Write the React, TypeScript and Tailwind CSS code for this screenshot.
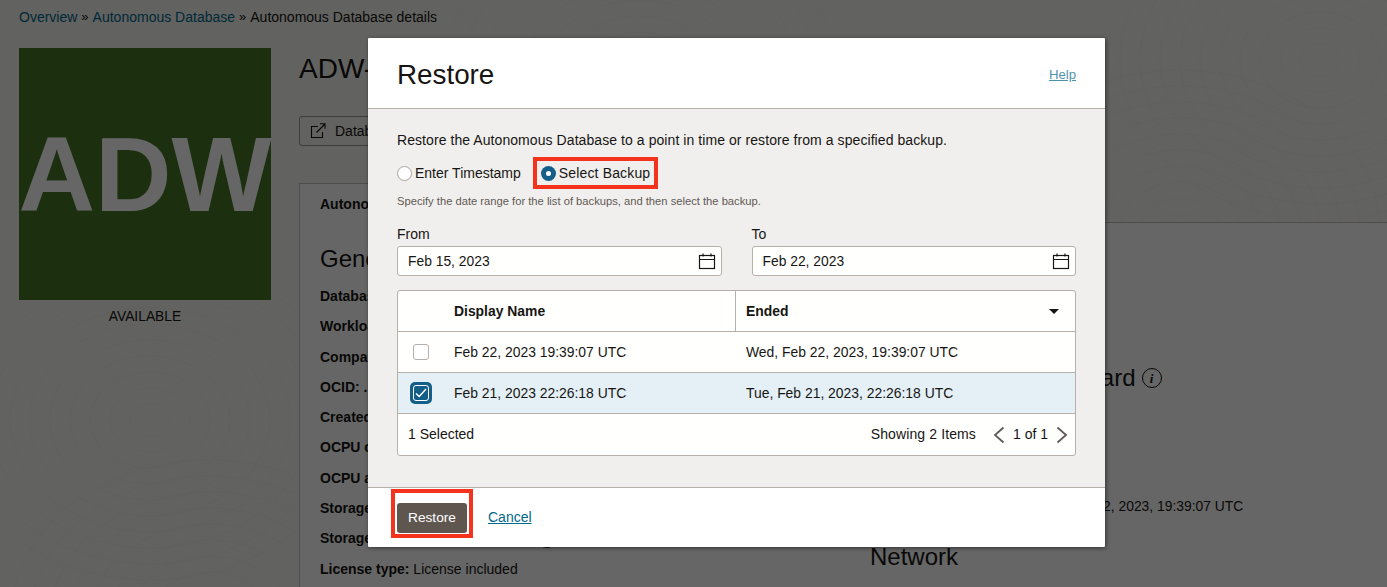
const labels = ['Database', 'Workload', 'Compartment', 'OCID: ...', 'Created', 'OCPU count', 'OCPU auto', 'Storage'];

const swirlCentres = [
  [1180, 230],
  [1320, 60],
  [150, 420],
  [210, 620],
  [640, 80],
];

function Swirls() {
  // faint fingerprint texture of the page background
  return (
    <svg className="absolute inset-0" width="1387" height="587" fill="none" stroke="#8c8474" strokeOpacity="0.03">
      {swirlCentres.map(([cx, cy]) =>
        [20, 40, 60, 80, 100, 120, 140, 160, 180, 200].map((r) => (
          <ellipse key={`${cx}-${r}`} cx={cx} cy={cy} rx={r} ry={r * 0.8} />
        )),
      )}
    </svg>
  );
}

function CalendarIcon() {
  return (
    <svg width="18" height="17" viewBox="0 0 18 17" fill="none" stroke="#161513" strokeWidth="1.2">
      <rect x="1.5" y="2.5" width="15" height="13" />
      <path d="M1.5 6.5h15M5 .5v3M13 .5v3" />
    </svg>
  );
}

function Chevron({ flip }: { flip?: boolean }) {
  return (
    <svg width="12" height="18" viewBox="0 0 12 18" fill="none" stroke="#5f5a55" strokeWidth="1.8" className={flip ? 'rotate-180' : ''}>
      <path d="M10.5 1.5 2 9l8.5 7.5" />
    </svg>
  );
}

function InfoIcon() {
  return (
    <span className="inline-flex h-[20px] w-[20px] items-center justify-center rounded-full border border-[#161513] font-['Liberation_Serif',serif] text-[13px] font-bold italic leading-none">
      i
    </span>
  );
}

function PageBehind() {
  return (
    <div className="relative flex h-[587px] flex-col overflow-hidden bg-[#f5f4f0] font-['Liberation_Sans',sans-serif] text-[14px] text-[#161513]">
      <Swirls />
      <div className="relative flex h-[34px] items-center gap-[4px] pl-[19px]">
        <span className="text-[#00688c]">Overview</span>
        <span className="text-[13px]">»</span>
        <span className="text-[#00688c]">Autonomous Database</span>
        <span className="text-[13px]">»</span>
        <span>Autonomous Database details</span>
      </div>
      <div className="relative mt-[14px] flex flex-1">
        <div className="ml-[19px] w-[252px] shrink-0">
          <div className="flex h-[252px] items-center justify-center bg-[#467828] text-[106px] font-bold leading-none text-white">
            ADW
          </div>
          <div className="mt-[7px] text-center text-[13.8px] leading-[20px]">AVAILABLE</div>
        </div>
        <div className="ml-[28px] flex min-w-0 flex-1 flex-col">
          <h1 className="h-[68px] pt-[4px] text-[28px] leading-[34px]">ADW-1</h1>
          <div className="flex h-[30px] w-[110px] items-center gap-[9px] rounded-[3px] border border-[#9e9892] pl-[10px]">
            <svg width="16" height="16" viewBox="0 0 16 16" fill="none" stroke="#161513" strokeWidth="1.1">
              <path d="M8 3.5H1.5v11h11V9M6.5 9.5 15 1M10 .8h5v5" />
            </svg>
            <span>Database</span>
          </div>
          <div className="mt-[37px] flex h-[40px] shrink-0 border-b border-[#c4c0ba]">
            <div className="-mb-px w-[220px] whitespace-nowrap border-x border-t border-[#c4c0ba] bg-white pl-[20px] pt-[10px] font-bold leading-[20px]">
              Autonom
            </div>
          </div>
          <div className="flex flex-1 border-l border-[#c4c0ba] bg-white">
            <div className="w-[550px] shrink-0 pl-[20px]">
              <div className="pt-[21px] text-[24px] leading-[30px]">General</div>
              <div className="mt-[12px] flex flex-col gap-[10.3px]">
                {labels.map((k) => (
                  <div key={k} className="font-bold leading-[20px]">
                    {k}
                  </div>
                ))}
                <div className="flex h-[20px] items-center font-bold">
                  Storage
                  <span className="ml-[165px] font-normal">
                    <InfoIcon />
                  </span>
                </div>
                <div className="leading-[20px]">
                  <b>License type:</b> License included
                </div>
              </div>
            </div>
            <div className="ml-[20px] flex flex-col">
              <div className="mt-[145px] flex items-center gap-[6px] text-[24px] leading-[16px]">
                Autonomous Data Guard <InfoIcon />
              </div>
              <div className="mt-[108px] whitespace-nowrap text-[13.85px] leading-[20px]">
                <b>Last Automatic Backup:</b> Wed, Feb 22, 2023, 19:39:07 UTC
              </div>
              <div className="mt-[26px] text-[24px] leading-[30px]">Network</div>
            </div>
          </div>
        </div>
      </div>
    </div>
  );
}

function DateField({ label, value }: { label: string; value: string }) {
  return (
    <div>
      <div className="text-[14px] leading-[18px]">{label}</div>
      <div className="mt-[3px] flex h-[30px] items-center justify-between rounded-[3px] border border-[#b5b0aa] bg-[#fffffe] pl-[10px] pr-[5px] text-[13.85px]">
        <span className="pt-[1px]">{value}</span>
        <CalendarIcon />
      </div>
    </div>
  );
}

function RestoreDialog() {
  return (
    <div className="absolute left-[368px] top-[38px] flex h-[509px] w-[737px] flex-col overflow-hidden rounded-[1px] bg-white font-['Liberation_Sans',sans-serif] text-[14px] text-[#161513] shadow-[1px_1px_4px_rgba(0,0,0,0.5)]">
      <div className="flex h-[71px] shrink-0 items-center justify-between border-b border-[#b5b0aa] px-[29px] pt-[4px]">
        <h2 className="text-[27.8px] leading-none">Restore</h2>
        <a className="text-[13.2px] text-[#00688c] underline opacity-70">Help</a>
      </div>
      <div className="flex-1 bg-[#f1efed] px-[29px]">
        <p className="pt-[21px] leading-[20px] tracking-[0.07px]">Restore the Autonomous Database to a point in time or restore from a specified backup.</p>
        <div className="mt-[7px] flex h-[32px] items-center">
          <span className="h-[15px] w-[15px] rounded-full border border-[#a8a39d] bg-white" />
          <span className="ml-[3px]">Enter Timestamp</span>
          <div className="ml-[12px] flex h-[32px] w-[125px] items-center border-4 border-[#f5321c] pl-[4px]">
            <span className="flex h-[15px] w-[15px] items-center justify-center rounded-full bg-[#135f88]">
              <span className="h-[5px] w-[5px] rounded-full bg-white" />
            </span>
            <span className="ml-[3px] whitespace-nowrap tracking-[0.15px]">Select Backup</span>
          </div>
        </div>
        <p className="mt-[4px] text-[11.2px] leading-[16px] text-[#5f5a55]">Specify the date range for the list of backups, and then select the backup.</p>
        <div className="mt-[16px] grid grid-cols-2 gap-x-[30px]">
          <DateField label="From" value="Feb 15, 2023" />
          <DateField label="To" value="Feb 22, 2023" />
        </div>
        <div className="mt-[14px] h-[166px] rounded-[3px] border border-[#b5b0aa] bg-[#fffffe] text-[13.9px]">
          <div className="grid h-[41px] grid-cols-[44px_294px_1fr] border-b border-[#b5b0aa] font-bold">
            <div />
            <div className="flex items-center pl-[12px]">Display Name</div>
            <div className="-ml-px flex items-center justify-between border-l border-[#b5b0aa] pl-[10px] pr-[16px]">
              <span>Ended</span>
              <span className="h-0 w-0 border-x-[5.5px] border-t-[5px] border-x-transparent border-t-[#161513]" />
            </div>
          </div>
          <div className="grid h-[41px] grid-cols-[44px_294px_1fr] items-center border-b border-[#b5b0aa]">
            <div className="flex justify-center pl-[1px]">
              <span className="h-[16px] w-[16px] rounded-[3px] border border-[#b5b0aa] bg-white" />
            </div>
            <div className="pl-[12px]">Feb 22, 2023 19:39:07 UTC</div>
            <div className="pl-[10px]">Wed, Feb 22, 2023, 19:39:07 UTC</div>
          </div>
          <div className="grid h-[41px] grid-cols-[44px_294px_1fr] items-center border-b border-[#b5b0aa] bg-[#e4f0f6]">
            <div className="flex justify-center pl-[1px]">
              <span className="flex h-[22px] w-[22px] items-center justify-center rounded-[5px] bg-[#135f88]">
                <span className="flex h-[16px] w-[16px] items-center justify-center rounded-[3px] border border-white">
                  <svg width="12" height="10" viewBox="0 0 12 10" fill="none" stroke="#fff" strokeWidth="1.5">
                    <path d="m1 5.5 3.2 3L11 1" />
                  </svg>
                </span>
              </span>
            </div>
            <div className="pl-[12px]">Feb 21, 2023 22:26:18 UTC</div>
            <div className="pl-[10px]">Tue, Feb 21, 2023, 22:26:18 UTC</div>
          </div>
          <div className="flex h-[41px] items-center pl-[10px] pr-[7px] text-[14px]">
            <span>1 Selected</span>
            <span className="ml-auto tracking-[0.12px]">Showing 2 Items</span>
            <span className="ml-[17px] flex items-center gap-[8px]">
              <Chevron />
              <span>1 of 1</span>
              <Chevron flip />
            </span>
          </div>
        </div>
      </div>
      <div className="flex h-[60px] shrink-0 items-start border-t border-[#b5b0aa] pl-[23px]">
        <div className="mt-[1px] flex h-[49px] w-[82px] items-end justify-center border-4 border-[#f5321c] pb-[1px]">
          <button className="h-[30px] w-[70px] rounded-[3px] bg-[#5f5650] text-[13.7px] text-white">Restore</button>
        </div>
        <a className="ml-[15px] mt-[19px] leading-[20px] text-[#00688c] underline">Cancel</a>
      </div>
    </div>
  );
}

export default function App() {
  return (
    <div className="relative h-[587px] overflow-hidden">
      <PageBehind />
      <div className="absolute inset-0 bg-black/60" />
      <RestoreDialog />
    </div>
  );
}
